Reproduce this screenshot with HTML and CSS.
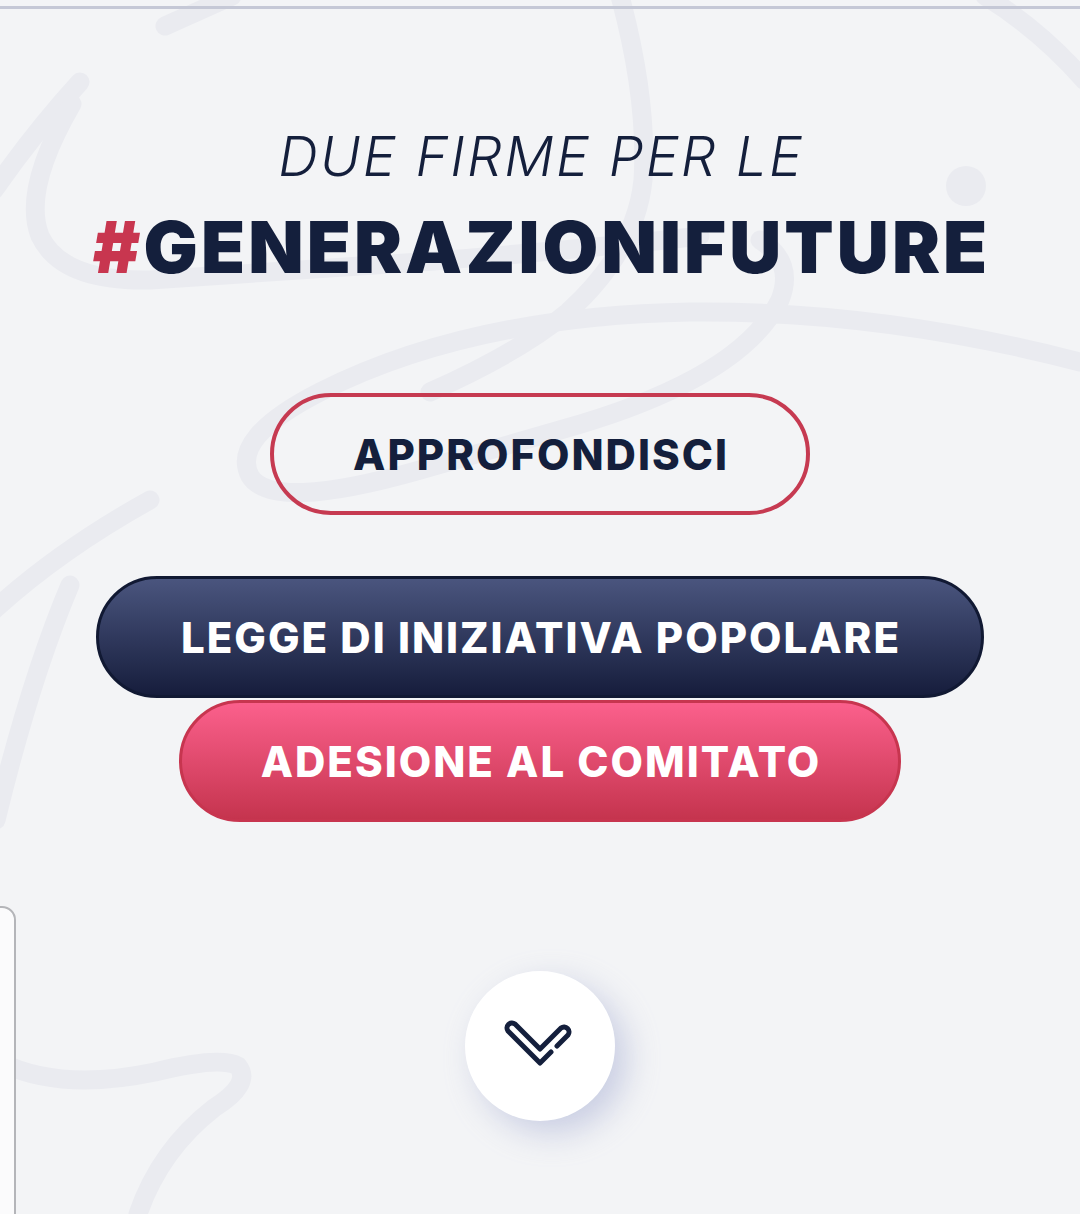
FILE: index.html
```html
<!DOCTYPE html>
<html lang="it">
<head>
    <meta charset="utf-8">
    <title>Due firme per le #generazionifuture</title>
    <link rel="stylesheet" href="styles.css">
</head>
<body>
    <div class="page">
        <svg class="swirls" width="1080" height="1214" viewBox="0 0 1080 1214" fill="none" aria-hidden="true">
            <g stroke="#eaebf0" stroke-width="19" stroke-linecap="round" stroke-linejoin="round">
                <path d="M232 -4 L165 26" />
                <path d="M80 82 Q36 130 -6 190" />
                <path d="M72 104 Q22 190 40 236 Q62 282 150 280 L420 262 Q600 248 700 236" />
                <path d="M620 -4 Q648 100 643 180 Q636 250 568 312 Q520 352 430 392" />
                <path d="M1080 362 Q880 310 690 312 Q470 316 320 392 Q230 438 250 476 Q272 512 420 470 L560 430 Q740 380 780 300 Q795 262 760 240" />
                <path d="M985 -4 Q1040 30 1084 80" />
                <path d="M150 500 Q60 550 -6 610" />
                <path d="M70 585 Q30 680 -4 820" />
                <path d="M0 1062 Q60 1092 155 1072 Q220 1056 238 1066 Q252 1084 214 1108 Q160 1150 138 1214" />
            </g>
            <circle cx="966" cy="186" r="20" fill="#eaebf0" />
        </svg>

        <div class="topline"></div>

        <main class="hero">
            <h1 class="title">
                <span class="title_pre">DUE FIRME PER LE</span>
                <span class="title_tag"><span class="hash">#</span>GENERAZIONIFUTURE</span>
            </h1>

            <a class="btn btn_outline" href="#">APPROFONDISCI</a>

            <div class="actions">
                <a class="btn btn_dark" href="#">LEGGE DI INIZIATIVA POPOLARE</a>
                <a class="btn btn_pink" href="#">ADESIONE AL COMITATO</a>
            </div>

            <a class="scroll_down" href="#" aria-label="Scorri in basso">
                <svg width="80" height="60" viewBox="0 0 80 60" fill="none">
                    <path d="M51 36 L40 47 L8 15 A5 5 0 0 1 15 8 L40 33 L61 12 A5 5 0 0 1 68 19 L57 30" stroke="#141f3c" stroke-width="5" stroke-linecap="round" stroke-linejoin="round" />
                </svg>
            </a>
        </main>

        <div class="side_panel"></div>
    </div>
</body>
</html>
```

FILE: styles.css
```css
html {
    box-sizing: border-box;
}

body {
    margin: 0;
    background-color: #f3f4f6;
    font-family: 'Inter', 'Liberation Sans', sans-serif;
    color: #141f3c;
}

.page {
    position: relative;
    height: 1214px;
    overflow: hidden;
}

.swirls {
    position: absolute;
    top: 0;
    left: 0;
}

.topline {
    position: relative;
    height: 3px;
    margin-top: 6px;
    background-color: #c5c8d6;
}

.hero {
    position: relative;
    display: flex;
    flex-direction: column;
    align-items: center;
}

.title {
    display: flex;
    flex-direction: column;
    align-items: center;
    margin: 120px 0 0 0;
    line-height: 1;
}

.title_pre {
    font-size: 55px;
    font-weight: 300;
    font-style: italic;
    letter-spacing: 2.3px;
    text-indent: 2.3px;
}

.title_tag {
    margin-top: 27px;
    font-size: 72px;
    font-weight: 900;
    letter-spacing: 3.1px;
    text-indent: 3.1px;
}

    .title_tag .hash {
        color: #c8364f;
    }

.btn {
    display: flex;
    align-items: center;
    justify-content: center;
    box-sizing: border-box;
    height: 122px;
    padding: 0 77px 0 79px;
    border-radius: 61px;
    font-size: 42px;
    font-weight: 800;
    letter-spacing: 2px;
    text-decoration: none;
    white-space: nowrap;
}

.btn_outline {
    margin-top: 110px;
    border: 4px solid #c63a51;
    color: #141f3c;
}

.actions {
    display: flex;
    flex-direction: column;
    align-items: center;
    gap: 2px;
    margin-top: 61px;
}

.btn_dark {
    padding: 0 80px 0 82px;
    border: 3px solid #111933;
    background: linear-gradient(to bottom, #4a557e, #161d3c);
    color: #ffffff;
}

.btn_pink {
    border: 3px solid #c7354f;
    background: linear-gradient(to bottom, #fb608c, #c5344e);
    color: #ffffff;
}

.scroll_down {
    display: flex;
    align-items: center;
    justify-content: center;
    width: 150px;
    height: 150px;
    margin-top: 149px;
    border-radius: 50%;
    background-color: #ffffff;
    box-shadow: 12px 12px 32px rgba(150, 160, 205, 0.45);
}

.side_panel {
    position: absolute;
    left: -300px;
    top: 906px;
    width: 312px;
    height: 400px;
    background-color: #fbfbfc;
    border: 2px solid #b4b5b9;
    border-radius: 0 14px 0 0;
}
```
